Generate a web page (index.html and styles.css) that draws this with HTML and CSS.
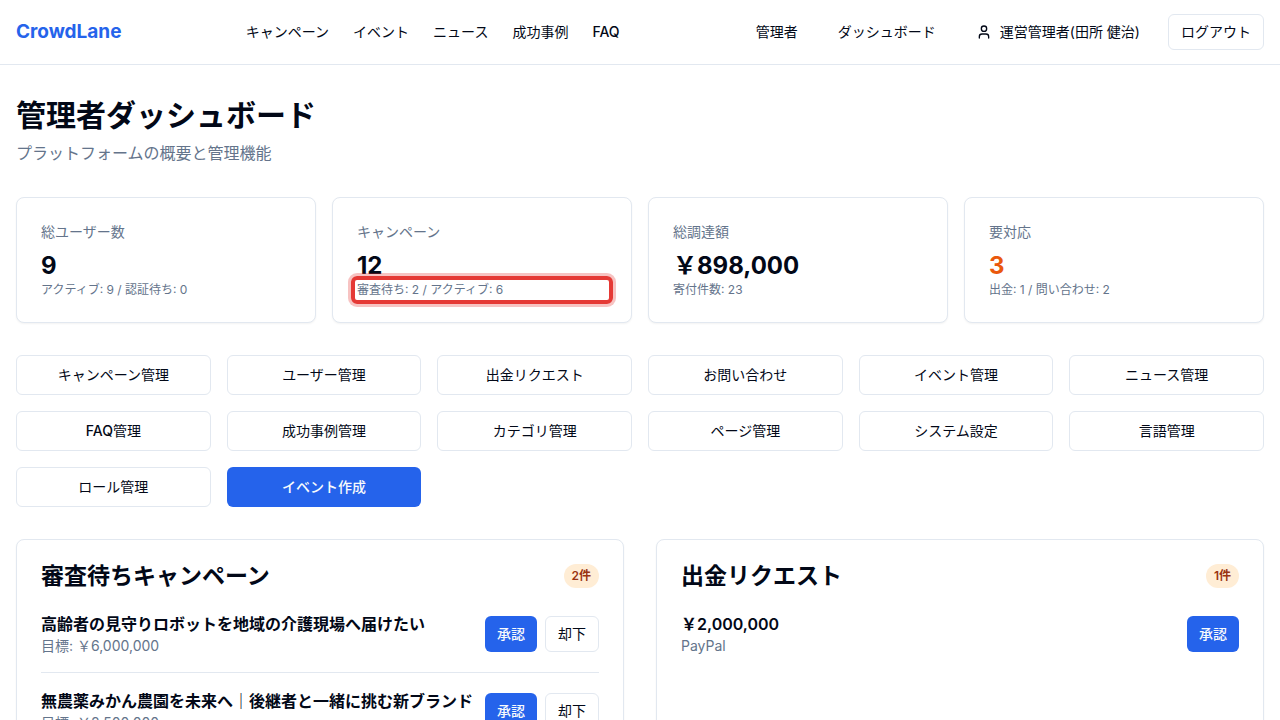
FILE: index.html
```
<!DOCTYPE html>
<html lang="ja">
<head>
<meta charset="UTF-8">
<meta name="viewport" content="width=device-width, initial-scale=1.0">
<title>CrowdLane</title>
<link rel="stylesheet" href="styles.css">
</head>
<body>
  <header class="header">
    <a class="logo" href="#">CrowdLane</a>
    <nav class="nav">
      <a href="#">キャンペーン</a>
      <a href="#">イベント</a>
      <a href="#">ニュース</a>
      <a href="#">成功事例</a>
      <a class="latin" href="#">FAQ</a>
    </nav>
    <div class="account">
      <a class="button ghost" href="#">管理者</a>
      <a class="button ghost" href="#">ダッシュボード</a>
      <a class="button ghost" href="#">
        <svg class="icon" viewBox="0 0 24 24" aria-hidden="true">
          <path d="M19 21v-2a4 4 0 0 0-4-4H9a4 4 0 0 0-4 4v2"/>
          <circle cx="12" cy="7" r="4"/>
        </svg>
        運営管理者(田所 健治)
      </a>
      <button class="button outline" type="button">ログアウト</button>
    </div>
  </header>

  <main class="main">
    <h1>管理者ダッシュボード</h1>
    <p class="lead">プラットフォームの概要と管理機能</p>

    <!-- Totals -->
    <section class="stats">
      <div class="card">
        <p class="label">総ユーザー数</p>
        <p class="value">9</p>
        <p class="note">アクティブ: 9 / 認証待ち: 0</p>
      </div>
      <div class="card">
        <p class="label">キャンペーン</p>
        <p class="value">12</p>
        <p class="note highlight">審査待ち: 2 / アクティブ: 6</p>
      </div>
      <div class="card">
        <p class="label">総調達額</p>
        <p class="value">￥898,000</p>
        <p class="note">寄付件数: 23</p>
      </div>
      <div class="card">
        <p class="label">要対応</p>
        <p class="value alert">3</p>
        <p class="note">出金: 1 / 問い合わせ: 2</p>
      </div>
    </section>

    <!-- Links to the admin pages -->
    <nav class="menu">
      <a class="button outline" href="#">キャンペーン管理</a>
      <a class="button outline" href="#">ユーザー管理</a>
      <a class="button outline" href="#">出金リクエスト</a>
      <a class="button outline" href="#">お問い合わせ</a>
      <a class="button outline" href="#">イベント管理</a>
      <a class="button outline" href="#">ニュース管理</a>
      <a class="button outline" href="#"><span><span class="latin">FAQ</span>管理</span></a>
      <a class="button outline" href="#">成功事例管理</a>
      <a class="button outline" href="#">カテゴリ管理</a>
      <a class="button outline" href="#">ページ管理</a>
      <a class="button outline" href="#">システム設定</a>
      <a class="button outline" href="#">言語管理</a>
      <a class="button outline" href="#">ロール管理</a>
      <a class="button primary" href="#">イベント作成</a>
    </nav>

    <div class="panels">
      <section class="card">
        <div class="panel-head">
          <h2>審査待ちキャンペーン</h2>
          <span class="badge">2件</span>
        </div>
        <div class="row">
          <div class="row-text">
            <p class="row-title">高齢者の見守りロボットを地域の介護現場へ届けたい</p>
            <p class="row-sub">目標: ￥6,000,000</p>
          </div>
          <div class="actions">
            <button class="button primary" type="button">承認</button>
            <button class="button outline" type="button">却下</button>
          </div>
        </div>
        <div class="row">
          <div class="row-text">
            <p class="row-title">無農薬みかん農園を未来へ｜後継者と一緒に挑む新ブランド</p>
            <p class="row-sub">目標: ￥8,500,000</p>
          </div>
          <div class="actions">
            <button class="button primary" type="button">承認</button>
            <button class="button outline" type="button">却下</button>
          </div>
        </div>
      </section>

      <section class="card">
        <div class="panel-head">
          <h2>出金リクエスト</h2>
          <span class="badge">1件</span>
        </div>
        <div class="row">
          <div class="row-text">
            <p class="row-title">￥2,000,000</p>
            <p class="row-sub">PayPal</p>
          </div>
          <div class="actions">
            <button class="button primary" type="button">承認</button>
          </div>
        </div>
      </section>
    </div>
  </main>
</body>
</html>
```
FILE: styles.css
```
* {
  box-sizing: border-box;
}
body {
  margin: 0;
  font-family: Inter, "Noto Sans CJK JP", sans-serif;
  font-size: 16px;
  line-height: 24px;
  color: #020817;
  background-color: #fff;
}
h1, h2, p {
  margin: 0;
}
a {
  color: inherit;
  text-decoration: none;
}

.header {
  display: flex;
  align-items: center;
  justify-content: space-between;
  padding: 14px 16px;
  border-bottom: 1px solid #e2e8f0;
}
.logo {
  font-size: 19px;
  font-weight: 700;
  color: #2563eb;
}
.nav {
  display: flex;
  gap: 24px;
  font-size: 14px;
}
.latin {
  font-weight: 500;
}
.account {
  display: flex;
  gap: 16px;
}

.button {
  display: inline-flex;
  align-items: center;
  justify-content: center;
  gap: 8px;
  height: 36px;
  padding: 0 12px;
  border: 0;
  border-radius: 6px;
  font-family: inherit;
  font-size: 14px;
  line-height: 20px;
  color: #020817;
  white-space: nowrap;
  background-color: #fff;
  cursor: pointer;
}
.outline {
  border: 1px solid #e2e8f0;
}
.primary {
  font-weight: 500;
  color: #f8fafc;
  background-color: #2563eb;
}
.icon {
  width: 16px;
  height: 16px;
  fill: none;
  stroke: currentColor;
  stroke-width: 2;
  stroke-linecap: round;
  stroke-linejoin: round;
}

.main {
  padding: 32px 16px;
}
h1 {
  font-size: 30px;
  font-weight: 700;
  line-height: 36px;
}
.lead {
  margin: 8px 0 32px;
  color: #64748b;
}

.card {
  padding: 24px;
  border: 1px solid #e2e8f0;
  border-radius: 8px;
  background-color: #fff;
  box-shadow: 0 1px 2px rgba(0, 0, 0, 0.05);
}
.stats {
  display: grid;
  grid-template-columns: repeat(4, 1fr);
  gap: 16px;
}
.label {
  margin-bottom: 8px;
  font-size: 14px;
  line-height: 20px;
  color: #64748b;
}
.value {
  font-size: 24px;
  font-weight: 700;
  line-height: 32px;
}
.alert {
  color: #ea580c;
}
.note {
  font-size: 12px;
  line-height: 16px;
  color: #64748b;
}
.highlight {
  position: relative;
}
.highlight::after {
  content: "";
  position: absolute;
  inset: -6px;
  border: 4px solid #e53935;
  border-radius: 6px;
  box-shadow: 0 0 0 3px rgba(229, 57, 53, 0.3);
}

.menu {
  display: grid;
  grid-template-columns: repeat(6, 1fr);
  gap: 16px;
  margin: 32px 0;
}
.menu .button {
  height: 40px;
}

.panels {
  display: grid;
  grid-template-columns: repeat(2, 1fr);
  gap: 32px;
}
.panel-head {
  display: flex;
  align-items: center;
  justify-content: space-between;
  margin-bottom: 24px;
}
h2 {
  font-size: 23px;
  font-weight: 600;
  line-height: 24px;
}
.badge {
  padding: 4px 8px;
  border-radius: 12px;
  font-size: 12px;
  font-weight: 600;
  line-height: 16px;
  color: #9a3412;
  background-color: #ffedd5;
}
.row {
  display: flex;
  align-items: center;
  justify-content: space-between;
  padding-bottom: 16px;
}
.row + .row {
  padding-top: 16px;
  border-top: 1px solid #e2e8f0;
}
.row-title {
  font-weight: 600;
}
.row-sub {
  font-size: 14px;
  line-height: 20px;
  color: #64748b;
}
.actions {
  display: flex;
  gap: 8px;
}
```
